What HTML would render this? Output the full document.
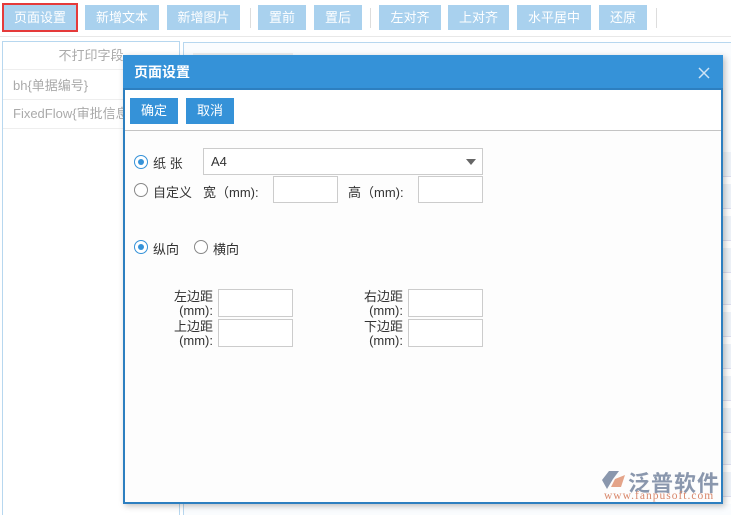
<!DOCTYPE html>
<html><head><meta charset="utf-8"><style>
*{margin:0;padding:0;box-sizing:border-box}
body{width:731px;height:515px;overflow:hidden;background:#fff;font-family:"Liberation Sans","Noto Sans CJK SC",sans-serif;font-size:13px;color:#333;position:relative}
.a{position:absolute}
.tb{background:#a9d1ee;color:#fff;height:25px;top:5px;line-height:25px;text-align:center;font-size:13px}
.sep{width:1px;height:20px;top:8px;background:#ddd}
.radio{width:14px;height:14px;border:1px solid #888;border-radius:50%;background:#fff}
.radio.on{border-color:#3592d8}
.radio.on::after{content:"";position:absolute;left:3px;top:3px;width:6px;height:6px;border-radius:50%;background:#3592d8}
.inp{border:1px solid #ccc;background:#fff}
.lbl{font-size:13px;color:#333}
</style></head><body>
<div class="a tb" style="left:4px;width:72px;outline:2px solid #e53a3a;outline-offset:0">页面设置</div>
<div class="a tb" style="left:85px;width:74px">新增文本</div>
<div class="a tb" style="left:167px;width:73px">新增图片</div>
<div class="a sep" style="left:250px"></div>
<div class="a tb" style="left:258px;width:48px">置前</div>
<div class="a tb" style="left:314px;width:48px">置后</div>
<div class="a sep" style="left:370px"></div>
<div class="a tb" style="left:379px;width:62px">左对齐</div>
<div class="a tb" style="left:448px;width:61px">上对齐</div>
<div class="a tb" style="left:517px;width:74px">水平居中</div>
<div class="a tb" style="left:599px;width:48px">还原</div>
<div class="a sep" style="left:656px"></div>
<div class="a" style="left:0;top:36px;width:731px;height:1px;background:#e8e8e8"></div>
<div class="a" style="left:2px;top:41px;width:178px;height:474px;border:1px solid #b7d7ef;border-bottom:none"></div>
<div class="a" style="left:3px;top:42px;width:176px;height:28px;line-height:28px;text-align:center;color:#aaa;border-bottom:1px solid #eee">不打印字段</div>
<div class="a" style="left:13px;top:72px;color:#aaa;line-height:28px">bh{单据编号}</div>
<div class="a" style="left:3px;top:99px;width:176px;height:1px;background:#eee"></div>
<div class="a" style="left:13px;top:100px;color:#aaa;line-height:28px">FixedFlow{审批信息}</div>
<div class="a" style="left:3px;top:128px;width:176px;height:1px;background:#eee"></div>
<div class="a" style="left:183px;top:42px;width:548px;height:473px;border-left:1px solid #b7d7ef;border-top:1px solid #b7d7ef;background:#fafcfe"></div>
<div class="a" style="left:193px;top:53px;width:100px;height:4px;background:#eee"></div>
<div class="a" style="left:722px;top:152px;width:9px;height:352px;background:repeating-linear-gradient(#eef3f8 0 24px,#dde 24px 25px,#fff 25px 32px)"></div>
<div class="a" style="left:123px;top:55px;width:600px;height:449px;border:2px solid #2d7fc0;border-top:none;background:#fdfdfd;box-shadow:2px 2px 6px rgba(0,0,0,.25)"></div>
<div class="a" style="left:123px;top:55px;width:600px;height:35px;background:#3592d8;border-bottom:2px solid #2d7fc0;color:#fff;font-weight:bold;font-size:14px;line-height:34px;padding-left:11px">页面设置</div>
<svg class="a" style="left:698px;top:67px" width="12" height="12"><path d="M1 1 L11 11 M11 1 L1 11" stroke="#cfe3f5" stroke-width="1.5"/></svg>
<div class="a" style="left:125px;top:90px;width:596px;height:41px;background:#fff;border-bottom:1px solid #c4c4c4"></div>
<div class="a" style="left:130px;top:98px;width:48px;height:26px;background:#3592d8;color:#fff;line-height:26px;text-align:center">确定</div>
<div class="a" style="left:186px;top:98px;width:48px;height:26px;background:#3592d8;color:#fff;line-height:26px;text-align:center">取消</div>
<div class="a radio on" style="left:134px;top:155px"></div>
<div class="a lbl" style="left:153px;top:153px">纸 张</div>
<div class="a inp" style="left:203px;top:148px;width:280px;height:27px;line-height:25px;padding-left:7px">A4</div>
<div class="a" style="left:466px;top:159px;width:0;height:0;border-left:5px solid transparent;border-right:5px solid transparent;border-top:6px solid #666"></div>
<div class="a radio" style="left:134px;top:183px"></div>
<div class="a lbl" style="left:153px;top:182px">自定义</div>
<div class="a lbl" style="left:203px;top:182px">宽（mm):</div>
<div class="a inp" style="left:273px;top:176px;width:65px;height:27px"></div>
<div class="a lbl" style="left:348px;top:182px">高（mm):</div>
<div class="a inp" style="left:418px;top:176px;width:65px;height:27px"></div>
<div class="a radio on" style="left:134px;top:240px"></div>
<div class="a lbl" style="left:153px;top:239px">纵向</div>
<div class="a radio" style="left:194px;top:240px"></div>
<div class="a lbl" style="left:213px;top:239px">横向</div>
<div class="a lbl" style="left:160px;top:290px;width:53px;text-align:right;line-height:14px">左边距<br>(mm):</div>
<div class="a inp" style="left:218px;top:289px;width:75px;height:28px"></div>
<div class="a lbl" style="left:160px;top:320px;width:53px;text-align:right;line-height:14px">上边距<br>(mm):</div>
<div class="a inp" style="left:218px;top:319px;width:75px;height:28px"></div>
<div class="a lbl" style="left:350px;top:290px;width:53px;text-align:right;line-height:14px">右边距<br>(mm):</div>
<div class="a inp" style="left:408px;top:289px;width:75px;height:28px"></div>
<div class="a lbl" style="left:350px;top:320px;width:53px;text-align:right;line-height:14px">下边距<br>(mm):</div>
<div class="a inp" style="left:408px;top:319px;width:75px;height:28px"></div>
<svg class="a" style="left:601px;top:469px" width="26" height="22"><path d="M8 2 L18 2 L12 10 L6 20 L1 11 Z" fill="#8a97ad"/><path d="M14 10 L24 6 L20 18 L10 18 Z" fill="#e4a489"/></svg>
<div class="a" style="left:628px;top:466px;font-size:22px;font-weight:bold;color:#8a97ad;letter-spacing:1px">泛普软件</div>
<div class="a" style="left:604px;top:490px;font-size:11.5px;color:#d9876a;font-family:'Liberation Serif',serif;letter-spacing:1px">www.fanpusoft.com</div>
</body></html>
